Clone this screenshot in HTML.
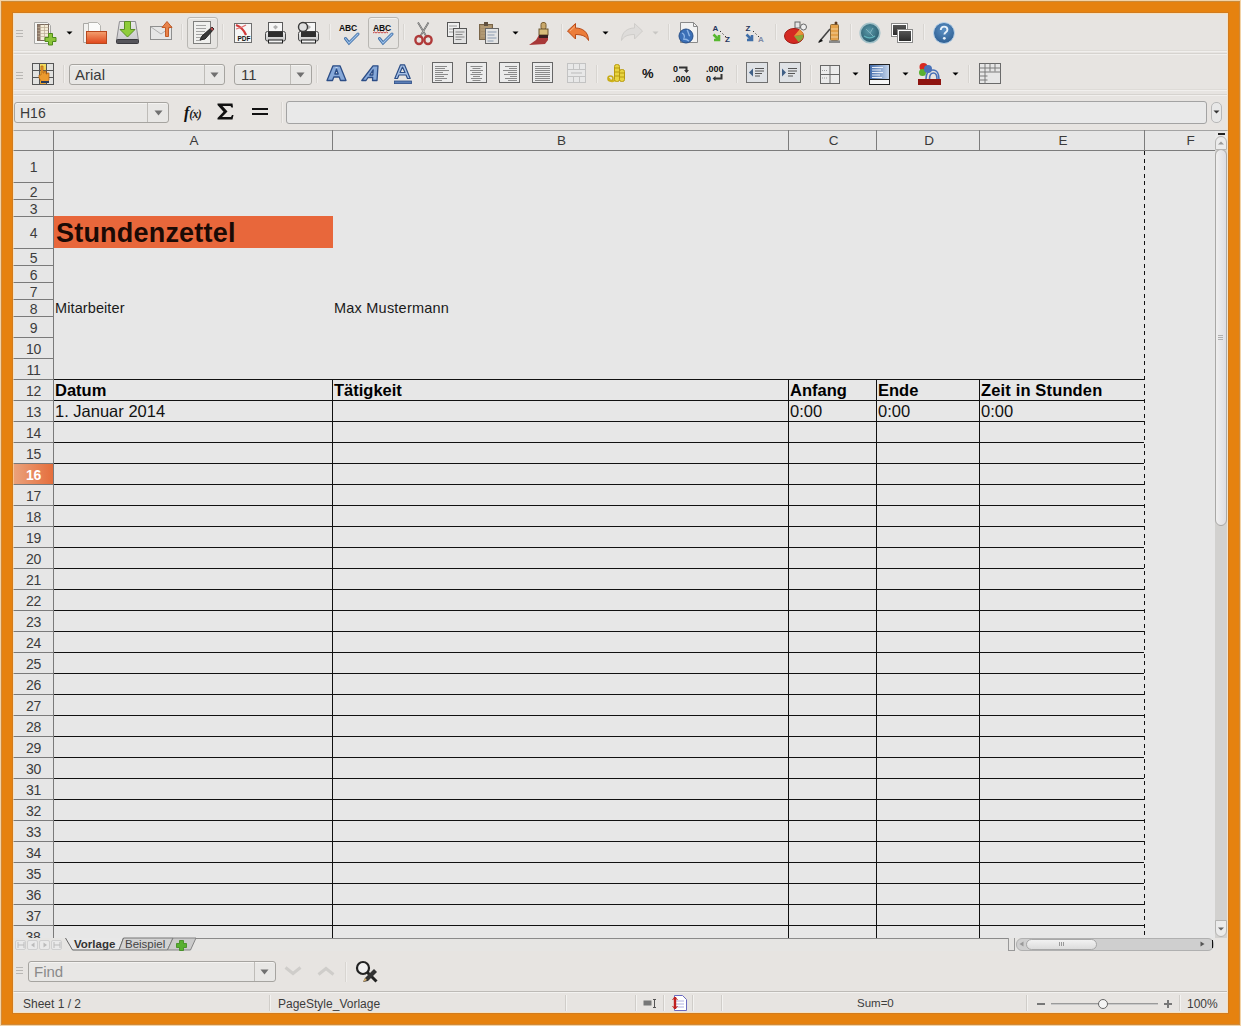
<!DOCTYPE html>
<html><head><meta charset="utf-8">
<style>
*{margin:0;padding:0;box-sizing:border-box}
html,body{width:1241px;height:1026px;overflow:hidden;background:#f3d3a6}
body{font-family:"Liberation Sans",sans-serif;position:relative}
div{position:absolute}
.t{white-space:nowrap;line-height:1}
svg{position:absolute;overflow:visible}
</style></head>
<body>

<div style="left:1px;top:1px;width:1239px;height:1024px;background:#e6820f"></div>
<div style="left:1px;top:1px;width:1239px;height:1px;background:#c98a3a"></div>
<div style="left:1px;top:1px;width:1px;height:1024px;background:#d08a3a"></div>
<div style="left:1239px;top:1px;width:1px;height:1024px;background:#d08a3a"></div>
<div style="left:1px;top:1024px;width:1239px;height:1px;background:#d08a3a"></div>
<div style="left:12px;top:12px;width:1217px;height:1002px;background:#d27b1e"></div>
<div style="left:13px;top:13px;width:1215px;height:1000px;background:#e7e4e1"></div>
<div style="left:13px;top:130px;width:1202px;height:21px;background:#e6e6e6"></div>
<div style="left:13px;top:151px;width:1202px;height:787px;background:#e7e7e7"></div>
<div style="left:13px;top:151px;width:40px;height:787px;background:#e6e6e6"></div>
<div style="left:13px;top:464px;width:40px;height:20px;background:linear-gradient(90deg,#eaa37d,#e56e3c)"></div>
<svg width="1241" height="1026" style="left:0;top:0" shape-rendering="crispEdges"><rect x="13" y="130" width="1202" height="1" fill="#a3a3a3"/><rect x="13" y="150" width="1202" height="1" fill="#7c7c7c"/><rect x="53" y="130" width="1" height="808" fill="#7a7a7a"/><rect x="332" y="130" width="1" height="20" fill="#7c7c7c"/><rect x="788" y="130" width="1" height="20" fill="#7c7c7c"/><rect x="876" y="130" width="1" height="20" fill="#7c7c7c"/><rect x="979" y="130" width="1" height="20" fill="#7c7c7c"/><rect x="1144" y="130" width="1" height="20" fill="#7c7c7c"/><rect x="1215" y="130" width="1" height="20" fill="#7c7c7c"/><rect x="13" y="182" width="40" height="1" fill="#7a7a7a"/><rect x="13" y="199" width="40" height="1" fill="#7a7a7a"/><rect x="13" y="216" width="40" height="1" fill="#7a7a7a"/><rect x="13" y="248" width="40" height="1" fill="#7a7a7a"/><rect x="13" y="265" width="40" height="1" fill="#7a7a7a"/><rect x="13" y="282" width="40" height="1" fill="#7a7a7a"/><rect x="13" y="299" width="40" height="1" fill="#7a7a7a"/><rect x="13" y="316" width="40" height="1" fill="#7a7a7a"/><rect x="13" y="337" width="40" height="1" fill="#7a7a7a"/><rect x="13" y="358" width="40" height="1" fill="#7a7a7a"/><rect x="13" y="379" width="40" height="1" fill="#7a7a7a"/><rect x="13" y="400" width="40" height="1" fill="#7a7a7a"/><rect x="13" y="421" width="40" height="1" fill="#7a7a7a"/><rect x="13" y="442" width="40" height="1" fill="#7a7a7a"/><rect x="13" y="463" width="40" height="1" fill="#7a7a7a"/><rect x="13" y="484" width="40" height="1" fill="#7a7a7a"/><rect x="13" y="505" width="40" height="1" fill="#7a7a7a"/><rect x="13" y="526" width="40" height="1" fill="#7a7a7a"/><rect x="13" y="547" width="40" height="1" fill="#7a7a7a"/><rect x="13" y="568" width="40" height="1" fill="#7a7a7a"/><rect x="13" y="589" width="40" height="1" fill="#7a7a7a"/><rect x="13" y="610" width="40" height="1" fill="#7a7a7a"/><rect x="13" y="631" width="40" height="1" fill="#7a7a7a"/><rect x="13" y="652" width="40" height="1" fill="#7a7a7a"/><rect x="13" y="673" width="40" height="1" fill="#7a7a7a"/><rect x="13" y="694" width="40" height="1" fill="#7a7a7a"/><rect x="13" y="715" width="40" height="1" fill="#7a7a7a"/><rect x="13" y="736" width="40" height="1" fill="#7a7a7a"/><rect x="13" y="757" width="40" height="1" fill="#7a7a7a"/><rect x="13" y="778" width="40" height="1" fill="#7a7a7a"/><rect x="13" y="799" width="40" height="1" fill="#7a7a7a"/><rect x="13" y="820" width="40" height="1" fill="#7a7a7a"/><rect x="13" y="841" width="40" height="1" fill="#7a7a7a"/><rect x="13" y="862" width="40" height="1" fill="#7a7a7a"/><rect x="13" y="883" width="40" height="1" fill="#7a7a7a"/><rect x="13" y="904" width="40" height="1" fill="#7a7a7a"/><rect x="13" y="925" width="40" height="1" fill="#7a7a7a"/><rect x="54" y="400" width="1090" height="1" fill="#111"/><rect x="54" y="421" width="1090" height="1" fill="#111"/><rect x="54" y="442" width="1090" height="1" fill="#111"/><rect x="54" y="463" width="1090" height="1" fill="#111"/><rect x="54" y="484" width="1090" height="1" fill="#111"/><rect x="54" y="505" width="1090" height="1" fill="#111"/><rect x="54" y="526" width="1090" height="1" fill="#111"/><rect x="54" y="547" width="1090" height="1" fill="#111"/><rect x="54" y="568" width="1090" height="1" fill="#111"/><rect x="54" y="589" width="1090" height="1" fill="#111"/><rect x="54" y="610" width="1090" height="1" fill="#111"/><rect x="54" y="631" width="1090" height="1" fill="#111"/><rect x="54" y="652" width="1090" height="1" fill="#111"/><rect x="54" y="673" width="1090" height="1" fill="#111"/><rect x="54" y="694" width="1090" height="1" fill="#111"/><rect x="54" y="715" width="1090" height="1" fill="#111"/><rect x="54" y="736" width="1090" height="1" fill="#111"/><rect x="54" y="757" width="1090" height="1" fill="#111"/><rect x="54" y="778" width="1090" height="1" fill="#111"/><rect x="54" y="799" width="1090" height="1" fill="#111"/><rect x="54" y="820" width="1090" height="1" fill="#111"/><rect x="54" y="841" width="1090" height="1" fill="#111"/><rect x="54" y="862" width="1090" height="1" fill="#111"/><rect x="54" y="883" width="1090" height="1" fill="#111"/><rect x="54" y="904" width="1090" height="1" fill="#111"/><rect x="54" y="925" width="1090" height="1" fill="#111"/><rect x="54" y="379" width="1090" height="1" fill="#111"/><rect x="332" y="379" width="1" height="559" fill="#111"/><rect x="788" y="379" width="1" height="559" fill="#111"/><rect x="876" y="379" width="1" height="559" fill="#111"/><rect x="979" y="379" width="1" height="559" fill="#111"/><rect x="1144" y="151" width="1" height="4" fill="#111"/><rect x="1144" y="159" width="1" height="4" fill="#111"/><rect x="1144" y="166" width="1" height="4" fill="#111"/><rect x="1144" y="174" width="1" height="4" fill="#111"/><rect x="1144" y="181" width="1" height="4" fill="#111"/><rect x="1144" y="189" width="1" height="4" fill="#111"/><rect x="1144" y="196" width="1" height="4" fill="#111"/><rect x="1144" y="204" width="1" height="4" fill="#111"/><rect x="1144" y="211" width="1" height="4" fill="#111"/><rect x="1144" y="219" width="1" height="4" fill="#111"/><rect x="1144" y="226" width="1" height="4" fill="#111"/><rect x="1144" y="234" width="1" height="4" fill="#111"/><rect x="1144" y="241" width="1" height="4" fill="#111"/><rect x="1144" y="249" width="1" height="4" fill="#111"/><rect x="1144" y="256" width="1" height="4" fill="#111"/><rect x="1144" y="264" width="1" height="4" fill="#111"/><rect x="1144" y="271" width="1" height="4" fill="#111"/><rect x="1144" y="279" width="1" height="4" fill="#111"/><rect x="1144" y="286" width="1" height="4" fill="#111"/><rect x="1144" y="294" width="1" height="4" fill="#111"/><rect x="1144" y="301" width="1" height="4" fill="#111"/><rect x="1144" y="309" width="1" height="4" fill="#111"/><rect x="1144" y="316" width="1" height="4" fill="#111"/><rect x="1144" y="324" width="1" height="4" fill="#111"/><rect x="1144" y="331" width="1" height="4" fill="#111"/><rect x="1144" y="339" width="1" height="4" fill="#111"/><rect x="1144" y="346" width="1" height="4" fill="#111"/><rect x="1144" y="354" width="1" height="4" fill="#111"/><rect x="1144" y="361" width="1" height="4" fill="#111"/><rect x="1144" y="369" width="1" height="4" fill="#111"/><rect x="1144" y="376" width="1" height="4" fill="#111"/><rect x="1144" y="384" width="1" height="4" fill="#111"/><rect x="1144" y="391" width="1" height="4" fill="#111"/><rect x="1144" y="399" width="1" height="4" fill="#111"/><rect x="1144" y="406" width="1" height="4" fill="#111"/><rect x="1144" y="414" width="1" height="4" fill="#111"/><rect x="1144" y="421" width="1" height="4" fill="#111"/><rect x="1144" y="429" width="1" height="4" fill="#111"/><rect x="1144" y="436" width="1" height="4" fill="#111"/><rect x="1144" y="444" width="1" height="4" fill="#111"/><rect x="1144" y="451" width="1" height="4" fill="#111"/><rect x="1144" y="459" width="1" height="4" fill="#111"/><rect x="1144" y="466" width="1" height="4" fill="#111"/><rect x="1144" y="474" width="1" height="4" fill="#111"/><rect x="1144" y="481" width="1" height="4" fill="#111"/><rect x="1144" y="489" width="1" height="4" fill="#111"/><rect x="1144" y="496" width="1" height="4" fill="#111"/><rect x="1144" y="504" width="1" height="4" fill="#111"/><rect x="1144" y="511" width="1" height="4" fill="#111"/><rect x="1144" y="519" width="1" height="4" fill="#111"/><rect x="1144" y="526" width="1" height="4" fill="#111"/><rect x="1144" y="534" width="1" height="4" fill="#111"/><rect x="1144" y="541" width="1" height="4" fill="#111"/><rect x="1144" y="549" width="1" height="4" fill="#111"/><rect x="1144" y="556" width="1" height="4" fill="#111"/><rect x="1144" y="564" width="1" height="4" fill="#111"/><rect x="1144" y="571" width="1" height="4" fill="#111"/><rect x="1144" y="579" width="1" height="4" fill="#111"/><rect x="1144" y="586" width="1" height="4" fill="#111"/><rect x="1144" y="594" width="1" height="4" fill="#111"/><rect x="1144" y="601" width="1" height="4" fill="#111"/><rect x="1144" y="609" width="1" height="4" fill="#111"/><rect x="1144" y="616" width="1" height="4" fill="#111"/><rect x="1144" y="624" width="1" height="4" fill="#111"/><rect x="1144" y="631" width="1" height="4" fill="#111"/><rect x="1144" y="639" width="1" height="4" fill="#111"/><rect x="1144" y="646" width="1" height="4" fill="#111"/><rect x="1144" y="654" width="1" height="4" fill="#111"/><rect x="1144" y="661" width="1" height="4" fill="#111"/><rect x="1144" y="669" width="1" height="4" fill="#111"/><rect x="1144" y="676" width="1" height="4" fill="#111"/><rect x="1144" y="684" width="1" height="4" fill="#111"/><rect x="1144" y="691" width="1" height="4" fill="#111"/><rect x="1144" y="699" width="1" height="4" fill="#111"/><rect x="1144" y="706" width="1" height="4" fill="#111"/><rect x="1144" y="714" width="1" height="4" fill="#111"/><rect x="1144" y="721" width="1" height="4" fill="#111"/><rect x="1144" y="729" width="1" height="4" fill="#111"/><rect x="1144" y="736" width="1" height="4" fill="#111"/><rect x="1144" y="744" width="1" height="4" fill="#111"/><rect x="1144" y="751" width="1" height="4" fill="#111"/><rect x="1144" y="759" width="1" height="4" fill="#111"/><rect x="1144" y="766" width="1" height="4" fill="#111"/><rect x="1144" y="774" width="1" height="4" fill="#111"/><rect x="1144" y="781" width="1" height="4" fill="#111"/><rect x="1144" y="789" width="1" height="4" fill="#111"/><rect x="1144" y="796" width="1" height="4" fill="#111"/><rect x="1144" y="804" width="1" height="4" fill="#111"/><rect x="1144" y="811" width="1" height="4" fill="#111"/><rect x="1144" y="819" width="1" height="4" fill="#111"/><rect x="1144" y="826" width="1" height="4" fill="#111"/><rect x="1144" y="834" width="1" height="4" fill="#111"/><rect x="1144" y="841" width="1" height="4" fill="#111"/><rect x="1144" y="849" width="1" height="4" fill="#111"/><rect x="1144" y="856" width="1" height="4" fill="#111"/><rect x="1144" y="864" width="1" height="4" fill="#111"/><rect x="1144" y="871" width="1" height="4" fill="#111"/><rect x="1144" y="879" width="1" height="4" fill="#111"/><rect x="1144" y="886" width="1" height="4" fill="#111"/><rect x="1144" y="894" width="1" height="4" fill="#111"/><rect x="1144" y="901" width="1" height="4" fill="#111"/><rect x="1144" y="909" width="1" height="4" fill="#111"/><rect x="1144" y="916" width="1" height="4" fill="#111"/><rect x="1144" y="924" width="1" height="4" fill="#111"/><rect x="1144" y="931" width="1" height="4" fill="#111"/><rect x="54" y="216" width="279" height="32" fill="#e8673b"/></svg>
<div class="t" style="left:174.0px;top:134px;width:40px;text-align:center;font-size:13.5px;color:#3a3a3a">A</div>
<div class="t" style="left:541.5px;top:134px;width:40px;text-align:center;font-size:13.5px;color:#3a3a3a">B</div>
<div class="t" style="left:813.5px;top:134px;width:40px;text-align:center;font-size:13.5px;color:#3a3a3a">C</div>
<div class="t" style="left:909.0px;top:134px;width:40px;text-align:center;font-size:13.5px;color:#3a3a3a">D</div>
<div class="t" style="left:1043.0px;top:134px;width:40px;text-align:center;font-size:13.5px;color:#3a3a3a">E</div>
<div class="t" style="left:1170.5px;top:134px;width:40px;text-align:center;font-size:13.5px;color:#3a3a3a">F</div>
<div class="t" style="left:13.5px;top:160.0px;width:40px;text-align:center;font-size:14px;letter-spacing:-0.3px;color:#3c3c3c;font-weight:normal">1</div>
<div class="t" style="left:13.5px;top:184.5px;width:40px;text-align:center;font-size:14px;letter-spacing:-0.3px;color:#3c3c3c;font-weight:normal">2</div>
<div class="t" style="left:13.5px;top:201.5px;width:40px;text-align:center;font-size:14px;letter-spacing:-0.3px;color:#3c3c3c;font-weight:normal">3</div>
<div class="t" style="left:13.5px;top:226.0px;width:40px;text-align:center;font-size:14px;letter-spacing:-0.3px;color:#3c3c3c;font-weight:normal">4</div>
<div class="t" style="left:13.5px;top:250.5px;width:40px;text-align:center;font-size:14px;letter-spacing:-0.3px;color:#3c3c3c;font-weight:normal">5</div>
<div class="t" style="left:13.5px;top:267.5px;width:40px;text-align:center;font-size:14px;letter-spacing:-0.3px;color:#3c3c3c;font-weight:normal">6</div>
<div class="t" style="left:13.5px;top:284.5px;width:40px;text-align:center;font-size:14px;letter-spacing:-0.3px;color:#3c3c3c;font-weight:normal">7</div>
<div class="t" style="left:13.5px;top:301.5px;width:40px;text-align:center;font-size:14px;letter-spacing:-0.3px;color:#3c3c3c;font-weight:normal">8</div>
<div class="t" style="left:13.5px;top:320.5px;width:40px;text-align:center;font-size:14px;letter-spacing:-0.3px;color:#3c3c3c;font-weight:normal">9</div>
<div class="t" style="left:13.5px;top:341.5px;width:40px;text-align:center;font-size:14px;letter-spacing:-0.3px;color:#3c3c3c;font-weight:normal">10</div>
<div class="t" style="left:13.5px;top:362.5px;width:40px;text-align:center;font-size:14px;letter-spacing:-0.3px;color:#3c3c3c;font-weight:normal">11</div>
<div class="t" style="left:13.5px;top:383.5px;width:40px;text-align:center;font-size:14px;letter-spacing:-0.3px;color:#3c3c3c;font-weight:normal">12</div>
<div class="t" style="left:13.5px;top:404.5px;width:40px;text-align:center;font-size:14px;letter-spacing:-0.3px;color:#3c3c3c;font-weight:normal">13</div>
<div class="t" style="left:13.5px;top:425.5px;width:40px;text-align:center;font-size:14px;letter-spacing:-0.3px;color:#3c3c3c;font-weight:normal">14</div>
<div class="t" style="left:13.5px;top:446.5px;width:40px;text-align:center;font-size:14px;letter-spacing:-0.3px;color:#3c3c3c;font-weight:normal">15</div>
<div class="t" style="left:13.5px;top:467.5px;width:40px;text-align:center;font-size:14px;letter-spacing:-0.3px;color:#fff;font-weight:bold">16</div>
<div class="t" style="left:13.5px;top:488.5px;width:40px;text-align:center;font-size:14px;letter-spacing:-0.3px;color:#3c3c3c;font-weight:normal">17</div>
<div class="t" style="left:13.5px;top:509.5px;width:40px;text-align:center;font-size:14px;letter-spacing:-0.3px;color:#3c3c3c;font-weight:normal">18</div>
<div class="t" style="left:13.5px;top:530.5px;width:40px;text-align:center;font-size:14px;letter-spacing:-0.3px;color:#3c3c3c;font-weight:normal">19</div>
<div class="t" style="left:13.5px;top:551.5px;width:40px;text-align:center;font-size:14px;letter-spacing:-0.3px;color:#3c3c3c;font-weight:normal">20</div>
<div class="t" style="left:13.5px;top:572.5px;width:40px;text-align:center;font-size:14px;letter-spacing:-0.3px;color:#3c3c3c;font-weight:normal">21</div>
<div class="t" style="left:13.5px;top:593.5px;width:40px;text-align:center;font-size:14px;letter-spacing:-0.3px;color:#3c3c3c;font-weight:normal">22</div>
<div class="t" style="left:13.5px;top:614.5px;width:40px;text-align:center;font-size:14px;letter-spacing:-0.3px;color:#3c3c3c;font-weight:normal">23</div>
<div class="t" style="left:13.5px;top:635.5px;width:40px;text-align:center;font-size:14px;letter-spacing:-0.3px;color:#3c3c3c;font-weight:normal">24</div>
<div class="t" style="left:13.5px;top:656.5px;width:40px;text-align:center;font-size:14px;letter-spacing:-0.3px;color:#3c3c3c;font-weight:normal">25</div>
<div class="t" style="left:13.5px;top:677.5px;width:40px;text-align:center;font-size:14px;letter-spacing:-0.3px;color:#3c3c3c;font-weight:normal">26</div>
<div class="t" style="left:13.5px;top:698.5px;width:40px;text-align:center;font-size:14px;letter-spacing:-0.3px;color:#3c3c3c;font-weight:normal">27</div>
<div class="t" style="left:13.5px;top:719.5px;width:40px;text-align:center;font-size:14px;letter-spacing:-0.3px;color:#3c3c3c;font-weight:normal">28</div>
<div class="t" style="left:13.5px;top:740.5px;width:40px;text-align:center;font-size:14px;letter-spacing:-0.3px;color:#3c3c3c;font-weight:normal">29</div>
<div class="t" style="left:13.5px;top:761.5px;width:40px;text-align:center;font-size:14px;letter-spacing:-0.3px;color:#3c3c3c;font-weight:normal">30</div>
<div class="t" style="left:13.5px;top:782.5px;width:40px;text-align:center;font-size:14px;letter-spacing:-0.3px;color:#3c3c3c;font-weight:normal">31</div>
<div class="t" style="left:13.5px;top:803.5px;width:40px;text-align:center;font-size:14px;letter-spacing:-0.3px;color:#3c3c3c;font-weight:normal">32</div>
<div class="t" style="left:13.5px;top:824.5px;width:40px;text-align:center;font-size:14px;letter-spacing:-0.3px;color:#3c3c3c;font-weight:normal">33</div>
<div class="t" style="left:13.5px;top:845.5px;width:40px;text-align:center;font-size:14px;letter-spacing:-0.3px;color:#3c3c3c;font-weight:normal">34</div>
<div class="t" style="left:13.5px;top:866.5px;width:40px;text-align:center;font-size:14px;letter-spacing:-0.3px;color:#3c3c3c;font-weight:normal">35</div>
<div class="t" style="left:13.5px;top:887.5px;width:40px;text-align:center;font-size:14px;letter-spacing:-0.3px;color:#3c3c3c;font-weight:normal">36</div>
<div class="t" style="left:13.5px;top:908.5px;width:40px;text-align:center;font-size:14px;letter-spacing:-0.3px;color:#3c3c3c;font-weight:normal">37</div>
<div class="t" style="left:13px;top:929.5px;width:40px;height:8.5px;overflow:hidden;text-align:center;font-size:14px;letter-spacing:-0.3px;color:#3a3a3a">38</div>
<div class="t" style="left:56px;top:220px;font-size:27px;color:#1a0a05;font-weight:bold;letter-spacing:0.2px">Stundenzettel</div>
<div class="t" style="left:55px;top:301px;font-size:14.5px;color:#1a1a1a;font-weight:normal;letter-spacing:0.1px">Mitarbeiter</div>
<div class="t" style="left:334px;top:301px;font-size:14.5px;color:#1a1a1a;font-weight:normal;letter-spacing:0.22px">Max Mustermann</div>
<div class="t" style="left:55px;top:382px;font-size:16.5px;color:#000;font-weight:bold;">Datum</div>
<div class="t" style="left:334px;top:382px;font-size:16.5px;color:#000;font-weight:bold;">Tätigkeit</div>
<div class="t" style="left:790px;top:382px;font-size:16.5px;color:#000;font-weight:bold;">Anfang</div>
<div class="t" style="left:878px;top:382px;font-size:16.5px;color:#000;font-weight:bold;">Ende</div>
<div class="t" style="left:981px;top:382px;font-size:16.5px;color:#000;font-weight:bold;letter-spacing:0.15px">Zeit in Stunden</div>
<div class="t" style="left:55px;top:403px;font-size:16.5px;color:#111;font-weight:normal;">1. Januar 2014</div>
<div class="t" style="left:790px;top:403px;font-size:16.5px;color:#111;font-weight:normal;">0:00</div>
<div class="t" style="left:878px;top:403px;font-size:16.5px;color:#111;font-weight:normal;">0:00</div>
<div class="t" style="left:981px;top:403px;font-size:16.5px;color:#111;font-weight:normal;">0:00</div>
<div style="left:13px;top:50px;width:1214px;height:1px;background:#dedbd7;"></div>
<div style="left:13px;top:51px;width:1214px;height:1px;background:#f1efed;"></div>
<div style="left:13px;top:53px;width:1214px;height:1px;background:#d6d3cf;"></div>
<div style="left:13px;top:54px;width:1214px;height:1px;background:#f1efed;"></div>
<div style="left:13px;top:89px;width:1214px;height:1px;background:#dedbd7;"></div>
<div style="left:13px;top:90px;width:1214px;height:1px;background:#f1efed;"></div>
<div style="left:13px;top:94px;width:1214px;height:1px;background:#d6d3cf;"></div>
<div style="left:13px;top:95px;width:1214px;height:1px;background:#f1efed;"></div>
<div style="left:16px;top:30px;width:7px;height:1px;background:#b9b7b4;"></div>
<div style="left:16px;top:33px;width:7px;height:1px;background:#b9b7b4;"></div>
<div style="left:16px;top:36px;width:7px;height:1px;background:#b9b7b4;"></div>
<div style="left:16px;top:72px;width:7px;height:1px;background:#b9b7b4;"></div>
<div style="left:16px;top:75px;width:7px;height:1px;background:#b9b7b4;"></div>
<div style="left:16px;top:78px;width:7px;height:1px;background:#b9b7b4;"></div>
<svg style="left:33px;top:21px" width="24" height="24" viewBox="0 0 24 24"><path d="M1.5 1.5h13l3 3v18h-16z" fill="#f6f6f4" stroke="#a8a8a6"/>
<rect x="4.5" y="3.5" width="11" height="16" fill="#f3ecd8" stroke="#7a6a5e"/>
<rect x="4.5" y="3.5" width="3" height="16" fill="#927c6c"/>
<path d="M4.5 6.5h11M4.5 9.5h11M4.5 12.5h11M4.5 15.5h11M11.5 3.5v16" stroke="#b9aa94" stroke-width="0.7"/>
<path d="M15.5 12.5h4v4h3.5v4h-3.5v3.5h-4v-3.5h-3.5v-4h3.5z" fill="#8cc43a" stroke="#4e8a1a"/></svg>
<svg style="left:66px;top:31px" width="7" height="4" viewBox="0 0 7 4"><path d="M0.5 0.5h6l-3 3z" fill="#000"/></svg>
<svg style="left:82px;top:21px" width="26" height="24" viewBox="0 0 26 24"><path d="M1.5 2.5h6l1 2h8v17h-15z" fill="#f2f1ef" stroke="#a9a8a5"/>
<path d="M6.5 1.5h9l3 3v10h-12z" fill="#fbfbfa" stroke="#b5b4b0"/>
<defs><linearGradient id="gop" x1="0" y1="0" x2="0" y2="1"><stop offset="0" stop-color="#f3a070"/><stop offset="1" stop-color="#e0451a"/></linearGradient></defs>
<rect x="4.5" y="10.5" width="20" height="12" fill="url(#gop)" stroke="#b8481e"/></svg>
<svg style="left:115px;top:20px" width="26" height="25" viewBox="0 0 26 25"><defs><linearGradient id="gsv" x1="0" y1="0" x2="0" y2="1"><stop offset="0" stop-color="#ecebeb"/><stop offset="1" stop-color="#c9c8cc"/></linearGradient></defs>
<path d="M4.5 1.5h16l3 19h-22z" fill="url(#gsv)" stroke="#8e8d92"/>
<rect x="1.5" y="19.5" width="22" height="4" rx="1" fill="#55545a" stroke="#3a393e"/>
<path d="M9.5 1.5h6v8h4.5l-7.5 7.5l-7.5-7.5h4.5z" fill="#8fcc3a" stroke="#5a8f24"/></svg>
<svg style="left:149px;top:20px" width="26" height="22" viewBox="0 0 26 22"><rect x="1.5" y="6.5" width="21" height="13" fill="#e6e6e6" stroke="#8f8f8f"/>
<path d="M2 7l10 7l10-7" fill="none" stroke="#b0b0b0"/>
<path d="M16.5 16.5v-9h-3.5l5-6l5 6h-3.5v9z" fill="#e8824a" stroke="#c25a26"/></svg>
<div style="left:181px;top:24px;width:1px;height:16px;background:#d8d5d1;"></div>
<div style="left:182px;top:24px;width:1px;height:16px;background:#f0eeec;"></div>
<div style="left:187px;top:17px;width:31px;height:32px;border:1px solid #b9b7b3;border-radius:3px;background:#e6e4e1;box-shadow:inset 0 1px 0 #f3f2f0"></div>
<svg style="left:192px;top:20px" width="24" height="25" viewBox="0 0 24 25"><rect x="1.5" y="1.5" width="17" height="22" fill="#f0f0ee" stroke="#7f7f7d"/>
<path d="M4 5.5h10M4 8.5h10M4 11.5h9M4 14.5h8M4 17.5h6M4 20.5h5" stroke="#9a9a98" stroke-width="0.9"/>
<path d="M8 20l2-4l10-9l2 2l-9 10z" fill="#3a3a3a" stroke="#222"/>
<path d="M19 8l2 2" stroke="#c05050" stroke-width="2"/></svg>
<div style="left:222px;top:24px;width:1px;height:16px;background:#d8d5d1;"></div>
<div style="left:223px;top:24px;width:1px;height:16px;background:#f0eeec;"></div>
<svg style="left:233px;top:22px" width="20" height="22" viewBox="0 0 20 22"><rect x="1.5" y="1.5" width="17" height="19" fill="#f6f6f6" stroke="#6f6f6f"/>
<path d="M3 3c5 2 8 5 10 10" stroke="#d23a3a" stroke-width="2.2" fill="none"/>
<path d="M3 7c4-1 7-2 10-4" stroke="#e07070" stroke-width="1.2" fill="none"/>
<text x="4.5" y="19" font-family="Liberation Sans" font-weight="bold" font-size="6.5" fill="#111">PDF</text></svg>
<svg style="left:264px;top:21px" width="23" height="23" viewBox="0 0 23 23"><defs><linearGradient id="gpr" x1="0" y1="0" x2="0" y2="1"><stop offset="0" stop-color="#f2f2f2"/><stop offset="1" stop-color="#c4c4c4"/></linearGradient></defs>
<rect x="4.5" y="1.5" width="14" height="10" fill="#f6f6f6" stroke="#5a5a5a"/>
<path d="M9 6l2.5 2.5l2.5-2.5l-2.5-2z" fill="#b0b0b0"/>
<rect x="1.5" y="10.5" width="20" height="9.5" rx="2" fill="url(#gpr)" stroke="#4a4a4a"/>
<rect x="4" y="10.5" width="15" height="5.5" fill="#2e2e2e"/>
<rect x="4.5" y="19" width="14" height="3" fill="#f4f4f4" stroke="#1e1e1e"/></svg>
<svg style="left:297px;top:21px" width="23" height="23" viewBox="0 0 23 23"><defs><linearGradient id="gpr" x1="0" y1="0" x2="0" y2="1"><stop offset="0" stop-color="#f2f2f2"/><stop offset="1" stop-color="#c4c4c4"/></linearGradient></defs>
<rect x="4.5" y="1.5" width="14" height="10" fill="#f6f6f6" stroke="#5a5a5a"/>
<path d="M9 6l2.5 2.5l2.5-2.5l-2.5-2z" fill="#b0b0b0"/>
<rect x="1.5" y="10.5" width="20" height="9.5" rx="2" fill="url(#gpr)" stroke="#4a4a4a"/>
<rect x="4" y="10.5" width="15" height="5.5" fill="#2e2e2e"/>
<rect x="4.5" y="19" width="14" height="3" fill="#f4f4f4" stroke="#1e1e1e"/><circle cx="6" cy="6" r="4.5" fill="#e0e0e0" stroke="#3a3a3a" stroke-width="1.4"/></svg>
<div style="left:329px;top:24px;width:1px;height:16px;background:#d8d5d1;"></div>
<div style="left:330px;top:24px;width:1px;height:16px;background:#f0eeec;"></div>
<svg style="left:338px;top:24px" width="23" height="21" viewBox="0 0 23 21"><text x="1" y="7" font-family="Liberation Sans" font-weight="bold" font-size="8.5" fill="#111" letter-spacing="-0.2">ABC</text><path d="M7.5 14.5l3.5 4.5l9-9" stroke="#3f6fa8" stroke-width="3" fill="none" stroke-linecap="round"/><path d="M7.5 14.5l3.5 4.5l9-9" stroke="#9cc0e8" stroke-width="1.2" fill="none" stroke-linecap="round"/></svg>
<div style="left:368px;top:17px;width:31px;height:32px;border:1px solid #b9b7b3;border-radius:3px;background:#e6e4e1;box-shadow:inset 0 1px 0 #f3f2f0"></div>
<svg style="left:372px;top:24px" width="23" height="21" viewBox="0 0 23 21"><text x="1" y="7" font-family="Liberation Sans" font-weight="bold" font-size="8.5" fill="#111" letter-spacing="-0.2">ABC</text><path d="M1 9l1.5-1l1.5 1l1.5-1l1.5 1l1.5-1l1.5 1l1.5-1l1.5 1l1.5-1l1.5 1" stroke="#c02020" fill="none" stroke-width="0.8"/><path d="M7.5 14.5l3.5 4.5l9-9" stroke="#3f6fa8" stroke-width="3" fill="none" stroke-linecap="round"/><path d="M7.5 14.5l3.5 4.5l9-9" stroke="#9cc0e8" stroke-width="1.2" fill="none" stroke-linecap="round"/></svg>
<div style="left:403px;top:24px;width:1px;height:16px;background:#d8d5d1;"></div>
<div style="left:404px;top:24px;width:1px;height:16px;background:#f0eeec;"></div>
<svg style="left:413px;top:21px" width="22" height="24" viewBox="0 0 22 24"><path d="M5 1.5l9 15M15.5 1.5l-9 15" stroke="#555" stroke-width="1.6" fill="none"/>
<path d="M5 1.5l9 15M15.5 1.5l-9 15" stroke="#ddd" stroke-width="0.6" fill="none"/>
<ellipse cx="6" cy="19" rx="3.6" ry="4" fill="none" stroke="#b03a3a" stroke-width="2.4"/>
<ellipse cx="15" cy="19" rx="3.6" ry="4" fill="none" stroke="#b03a3a" stroke-width="2.4"/></svg>
<svg style="left:446px;top:21px" width="22" height="24" viewBox="0 0 22 24"><rect x="1.5" y="1.5" width="12" height="14" fill="#efefef" stroke="#555"/>
<path d="M3 5h8M3 8h5M3 11h6" stroke="#999"/>
<rect x="7.5" y="7.5" width="13" height="15" fill="#e2e2e2" stroke="#555"/>
<path d="M9.5 11h9M9.5 13.5h7M9.5 16h9M9.5 18.5h6" stroke="#888"/></svg>
<svg style="left:478px;top:21px" width="22" height="24" viewBox="0 0 22 24"><rect x="1.5" y="3.5" width="13" height="15" fill="#a88f6a" stroke="#7a6548"/>
<path d="M3 6h10M3 9h10M3 12h10M3 15h10" stroke="#bba37e"/>
<rect x="6" y="1" width="4" height="4" fill="#5f5040"/>
<rect x="7.5" y="7.5" width="13" height="15" fill="#e4e4e4" stroke="#666"/>
<path d="M9.5 11h9M9.5 14h7M9.5 17h9M9.5 20h6" stroke="#8a9ab0"/></svg>
<svg style="left:512px;top:31px" width="7" height="4" viewBox="0 0 7 4"><path d="M0.5 0.5h6l-3 3z" fill="#000"/></svg>
<svg style="left:528px;top:21px" width="24" height="24" viewBox="0 0 24 24"><rect x="13" y="1.5" width="5" height="7" rx="2" fill="#c9a86a" stroke="#7a5f30"/>
<rect x="11" y="8" width="9" height="6" fill="#d8bd7a" stroke="#6a5530"/>
<path d="M11 14h9v5l-3 4l-16 1l7-5z" fill="#a83838"/>
<path d="M11 14h9v3h-9z" fill="#3a2020"/></svg>
<div style="left:561px;top:24px;width:1px;height:16px;background:#d8d5d1;"></div>
<div style="left:562px;top:24px;width:1px;height:16px;background:#f0eeec;"></div>
<svg style="left:566px;top:22px" width="26" height="20" viewBox="0 0 26 20"><path d="M1.5 9l8-7.5v4.5c7 0 13 4 13 12.5c-2-4-6-6-13-6v4.5z" fill="#ec7d3a" stroke="#b84a18"/>
<path d="M4 9l5-4.5" stroke="#f7b080" stroke-width="1"/></svg>
<svg style="left:602px;top:31px" width="7" height="4" viewBox="0 0 7 4"><path d="M0.5 0.5h6l-3 3z" fill="#000"/></svg>
<svg style="left:618px;top:22px" width="26" height="20" viewBox="0 0 26 20"><path d="M24.5 9l-8-7.5v4.5c-7 0-13 4-13 12.5c2-4 6-6 13-6v4.5z" fill="#dedcda" stroke="#cfcdca"/></svg>
<svg style="left:652px;top:31px" width="7" height="4" viewBox="0 0 7 4"><path d="M0.5 0.5h6l-3 3z" fill="#c8c6c3"/></svg>
<div style="left:668px;top:24px;width:1px;height:16px;background:#d8d5d1;"></div>
<div style="left:669px;top:24px;width:1px;height:16px;background:#f0eeec;"></div>
<svg style="left:678px;top:21px" width="22" height="23" viewBox="0 0 22 23"><path d="M2.5 1.5h13l4 4v16h-17z" fill="#f2f2f2" stroke="#8a8a8a"/>
<path d="M15.5 1.5v4h4" fill="none" stroke="#8a8a8a"/>
<circle cx="8" cy="15" r="7" fill="#3b6fb6" stroke="#284f88"/>
<path d="M4 12c2 1 3 3 2 5M9 9c2 2 1 5 3 6M5 18c3 0 5 1 6 2" stroke="#8fb6e6" stroke-width="1.3" fill="none"/></svg>
<svg style="left:712px;top:23px" width="22" height="21" viewBox="0 0 22 21"><text x="0.5" y="8" font-family="Liberation Sans" font-weight="bold" font-size="8" fill="#26365e">A</text>
<path d="M1.5 11.5l5.5 5.5M7 12v5h-5" stroke="#58b830" stroke-width="2.6" fill="none"/>
<text x="13" y="19" font-family="Liberation Sans" font-weight="bold" font-size="8" fill="#26365e">Z</text>
<path d="M8 8l1 1M10.5 10.5l1 1M13 13l1 1" stroke="#333"/></svg>
<svg style="left:745px;top:23px" width="22" height="21" viewBox="0 0 22 21"><text x="0.5" y="8" font-family="Liberation Sans" font-weight="bold" font-size="8" fill="#26365e">Z</text>
<path d="M1.5 11.5l5.5 5.5M7 12v5h-5" stroke="#3f6ea8" stroke-width="2.6" fill="none"/>
<text x="13" y="19" font-family="Liberation Sans" font-weight="bold" font-size="8" fill="#7f8ba6">A</text>
<path d="M8 8l1 1M10.5 10.5l1 1M13 13l1 1" stroke="#333"/></svg>
<div style="left:775px;top:24px;width:1px;height:16px;background:#d8d5d1;"></div>
<div style="left:776px;top:24px;width:1px;height:16px;background:#f0eeec;"></div>
<svg style="left:783px;top:20px" width="26" height="25" viewBox="0 0 26 25"><rect x="12" y="2" width="5" height="6" fill="#e5e5e5" stroke="#666"/>
<circle cx="20.5" cy="7" r="3" fill="#eee" stroke="#666"/>
<ellipse cx="11" cy="16" rx="9.5" ry="7.5" fill="#d42a22" stroke="#a01a14"/>
<path d="M11 16l9.5-1.5c0.5 3-1.5 6-5 7.5z" fill="#8aa83a"/>
<path d="M11 16l9.5-1.5c-0.5-2-2-4-4-5z" fill="#e8963a"/></svg>
<svg style="left:817px;top:20px" width="24" height="25" viewBox="0 0 24 25"><path d="M2 22l11-13" stroke="#444" stroke-width="1.6"/>
<path d="M1 23l3-4l2 2z" fill="#111"/>
<rect x="13.5" y="4.5" width="8" height="16" rx="1" fill="#e3a14a" stroke="#8a6a3a"/>
<path d="M14 9h7M14 13h7M14 17h7" stroke="#f3d09a"/>
<circle cx="19" cy="3" r="1.5" fill="#5a3a22"/>
<rect x="12" y="20.5" width="11" height="2.5" fill="#8a8a8a"/></svg>
<div style="left:850px;top:24px;width:1px;height:16px;background:#d8d5d1;"></div>
<div style="left:851px;top:24px;width:1px;height:16px;background:#f0eeec;"></div>
<svg style="left:859px;top:22px" width="22" height="22" viewBox="0 0 22 22"><defs><radialGradient id="gnv" cx="0.45" cy="0.4" r="0.6"><stop offset="0" stop-color="#5a9aaa"/><stop offset="1" stop-color="#2a5a6c"/></radialGradient></defs>
<circle cx="11" cy="11" r="9.8" fill="url(#gnv)" stroke="#a3c2c9" stroke-width="1.6"/>
<path d="M7 7l8 8M14 6l-3 5" stroke="#7fb0bc" stroke-width="1"/>
<path d="M5 14c3 2 7 3 11 0" stroke="#62b4bc" stroke-width="1.3" fill="none"/></svg>
<svg style="left:891px;top:23px" width="23" height="21" viewBox="0 0 23 21"><defs><linearGradient id="gwn" x1="0" y1="0" x2="0" y2="1"><stop offset="0" stop-color="#555"/><stop offset="1" stop-color="#2c2c2c"/></linearGradient></defs>
<rect x="0.5" y="0.5" width="16" height="13" fill="#fff" stroke="#8a8a8a"/>
<rect x="2" y="2" width="13" height="10" fill="url(#gwn)"/>
<rect x="6.5" y="6.5" width="15" height="13" fill="#fff" stroke="#8a8a8a"/>
<rect x="8" y="8" width="12" height="10" fill="url(#gwn)"/></svg>
<div style="left:923px;top:24px;width:1px;height:16px;background:#d8d5d1;"></div>
<div style="left:924px;top:24px;width:1px;height:16px;background:#f0eeec;"></div>
<svg style="left:932px;top:21px" width="24" height="24" viewBox="0 0 24 24"><defs><radialGradient id="ghl" cx="0.5" cy="0.35" r="0.65"><stop offset="0" stop-color="#5b90c4"/><stop offset="1" stop-color="#2f5f92"/></radialGradient></defs><circle cx="12" cy="12" r="10.5" fill="url(#ghl)" stroke="#b9d3ea" stroke-width="1"/>
<path d="M8.8 9c0-2.2 1.5-3.4 3.3-3.4s3.3 1.2 3.3 3.1c0 2.5-3 2.6-3 4.8" stroke="#e8f2fb" stroke-width="1.9" fill="none"/>
<circle cx="12.3" cy="17.3" r="1.4" fill="#e8f2fb"/></svg>
<svg style="left:31px;top:62px" width="24" height="24" viewBox="0 0 24 24"><defs><linearGradient id="ghd" x1="0" y1="0" x2="0" y2="1"><stop offset="0" stop-color="#f4e060"/><stop offset="1" stop-color="#e8a030"/></linearGradient></defs>
<rect x="1.5" y="1.5" width="21" height="21" fill="#e2e2e0" stroke="#555"/>
<rect x="8.5" y="1.5" width="7" height="21" fill="url(#ghd)"/>
<path d="M8.5 1.5v21M15.5 1.5v21M1.5 8.5h21M1.5 15.5h21" stroke="#555"/>
<rect x="1.5" y="1.5" width="21" height="21" fill="none" stroke="#555"/>
<path d="M10 4h2v7h1v-2h2v3h1v-1h2v7l-2 2h-5l-3-4v-3h2z" fill="#eb9a2e" stroke="#b06010" stroke-width="0.7"/>
<rect x="10" y="19" width="8" height="2" fill="#2a3a5a"/></svg>
<div style="left:63px;top:65px;width:1px;height:18px;background:#d8d5d1;"></div>
<div style="left:64px;top:65px;width:1px;height:18px;background:#f0eeec;"></div>
<div style="left:69px;top:64px;width:156px;height:21px;border:1px solid #a6a4a0;border-radius:3px;background:#e8e7e5;box-shadow:inset 0 1px 0 #f4f3f1"></div>
<div style="left:204px;top:65px;width:1px;height:19px;background:#bebcb8;"></div>
<div class="t" style="left:75px;top:67px;font-size:15px;color:#3a3a3a">Arial</div>
<svg style="left:210px;top:72px" width="9" height="6" viewBox="0 0 9 6"><path d="M0.5 0.5h8l-4 5z" fill="#707070"/></svg>
<div style="left:234px;top:64px;width:78px;height:21px;border:1px solid #a6a4a0;border-radius:3px;background:#e8e7e5;box-shadow:inset 0 1px 0 #f4f3f1"></div>
<div style="left:290px;top:65px;width:1px;height:19px;background:#bebcb8;"></div>
<div class="t" style="left:241px;top:67px;font-size:15px;color:#3a3a3a">11</div>
<svg style="left:296px;top:72px" width="9" height="6" viewBox="0 0 9 6"><path d="M0.5 0.5h8l-4 5z" fill="#707070"/></svg>
<div style="left:316px;top:65px;width:1px;height:18px;background:#d8d5d1;"></div>
<div style="left:317px;top:65px;width:1px;height:18px;background:#f0eeec;"></div>
<svg style="left:326px;top:65px" width="21" height="17" viewBox="0 0 21 17"><path d="M1 15.5L7 0.8H14L20 15.5H14.5L13.2 12H7.8L6.5 15.5ZM8.8 9H12.2L10.5 4.2Z" fill="#86a8d8" stroke="#2c4d86" stroke-width="1.3" fill-rule="evenodd" stroke-linejoin="round"/><path d="M9.5 2.5h2" stroke="#c8daf0"/></svg>
<svg style="left:361px;top:65px" width="18" height="17" viewBox="0 0 18 17"><path d="M0.8 15.5L12 0.8H17L16 15.5H11.5L11.7 12.5H7L5 15.5ZM8.8 10H11.8L12.2 4.8Z" fill="#86a8d8" stroke="#2c4d86" stroke-width="1.3" fill-rule="evenodd" stroke-linejoin="round"/></svg>
<svg style="left:394px;top:64px" width="18" height="20" viewBox="0 0 18 20"><path d="M0.8 14.5L6.5 0.8H10.5L16.2 14.5H13.5L12 11H5L3.5 14.5ZM6 8.5H11L8.5 3Z" fill="#a8c2e6" stroke="#2c4d86" stroke-width="1.2" fill-rule="evenodd" stroke-linejoin="round"/><rect x="0.5" y="17" width="17" height="2.6" fill="#5a7db5" stroke="#2c4d86" stroke-width="0.8"/></svg>
<div style="left:422px;top:65px;width:1px;height:18px;background:#d8d5d1;"></div>
<div style="left:423px;top:65px;width:1px;height:18px;background:#f0eeec;"></div>
<svg style="left:432px;top:62px" width="22" height="22" viewBox="0 0 22 22"><rect x="0.5" y="0.5" width="20" height="20" fill="#ececec" stroke="#666"/><path d="M3 4.5h12" stroke="#8a8a8a" stroke-width="1"/><path d="M3 6.5h10" stroke="#8a8a8a" stroke-width="1"/><path d="M3 8.5h14" stroke="#8a8a8a" stroke-width="1"/><path d="M3 10.5h8" stroke="#8a8a8a" stroke-width="1"/><path d="M3 12.5h13" stroke="#8a8a8a" stroke-width="1"/><path d="M3 14.5h9" stroke="#8a8a8a" stroke-width="1"/><path d="M3 16.5h12" stroke="#8a8a8a" stroke-width="1"/><path d="M3 18.5h7" stroke="#8a8a8a" stroke-width="1"/></svg>
<svg style="left:466px;top:62px" width="22" height="22" viewBox="0 0 22 22"><rect x="0.5" y="0.5" width="20" height="20" fill="#ececec" stroke="#666"/><path d="M4.5 4.5h12" stroke="#8a8a8a" stroke-width="1"/><path d="M6.5 6.5h8" stroke="#8a8a8a" stroke-width="1"/><path d="M4.0 8.5h13" stroke="#8a8a8a" stroke-width="1"/><path d="M6.0 10.5h9" stroke="#8a8a8a" stroke-width="1"/><path d="M4.5 12.5h12" stroke="#8a8a8a" stroke-width="1"/><path d="M7.0 14.5h7" stroke="#8a8a8a" stroke-width="1"/><path d="M5.0 16.5h11" stroke="#8a8a8a" stroke-width="1"/><path d="M6.5 18.5h8" stroke="#8a8a8a" stroke-width="1"/></svg>
<svg style="left:499px;top:62px" width="22" height="22" viewBox="0 0 22 22"><rect x="0.5" y="0.5" width="20" height="20" fill="#ececec" stroke="#666"/><path d="M6 4.5h12" stroke="#8a8a8a" stroke-width="1"/><path d="M10 6.5h8" stroke="#8a8a8a" stroke-width="1"/><path d="M4 8.5h14" stroke="#8a8a8a" stroke-width="1"/><path d="M9 10.5h9" stroke="#8a8a8a" stroke-width="1"/><path d="M5 12.5h13" stroke="#8a8a8a" stroke-width="1"/><path d="M11 14.5h7" stroke="#8a8a8a" stroke-width="1"/><path d="M6 16.5h12" stroke="#8a8a8a" stroke-width="1"/><path d="M9 18.5h9" stroke="#8a8a8a" stroke-width="1"/></svg>
<svg style="left:532px;top:62px" width="22" height="22" viewBox="0 0 22 22"><rect x="0.5" y="0.5" width="20" height="20" fill="#ececec" stroke="#666"/><path d="M3 4.5h15" stroke="#8a8a8a" stroke-width="1"/><path d="M3 6.5h15" stroke="#8a8a8a" stroke-width="1"/><path d="M3 8.5h15" stroke="#8a8a8a" stroke-width="1"/><path d="M3 10.5h15" stroke="#8a8a8a" stroke-width="1"/><path d="M3 12.5h15" stroke="#8a8a8a" stroke-width="1"/><path d="M3 14.5h15" stroke="#8a8a8a" stroke-width="1"/><path d="M3 16.5h15" stroke="#8a8a8a" stroke-width="1"/><path d="M3 18.5h15" stroke="#8a8a8a" stroke-width="1"/></svg>
<svg style="left:567px;top:63px" width="20" height="21" viewBox="0 0 20 21"><rect x="0.5" y="0.5" width="18" height="19" fill="#e8e8e8" stroke="#c3c3c3"/>
<path d="M0.5 6.5h18M0.5 13.5h18M6.5 0.5v6M12.5 0.5v6M6.5 13.5v6M12.5 13.5v6" stroke="#c3c3c3"/>
<path d="M4 10h11" stroke="#bbb"/></svg>
<div style="left:596px;top:65px;width:1px;height:18px;background:#d8d5d1;"></div>
<div style="left:597px;top:65px;width:1px;height:18px;background:#f0eeec;"></div>
<svg style="left:607px;top:63px" width="20" height="21" viewBox="0 0 20 21"><path d="M2 15c0 3 4 4 6 2" stroke="#d4b820" stroke-width="2.2" fill="none"/>
<circle cx="3.5" cy="15.5" r="2.5" fill="none" stroke="#c8ac18" stroke-width="1.6"/>
<rect x="7.5" y="1.5" width="5" height="17" rx="2" fill="#e8d440" stroke="#b89a10"/>
<rect x="12.5" y="6.5" width="5" height="12" rx="2" fill="#e8d440" stroke="#b89a10"/>
<path d="M8 5h4M8 9h4M8 13h4M13 10h4M13 14h4" stroke="#b89a10"/></svg>
<div class="t" style="left:642px;top:67px;font-size:13px;font-weight:bold;color:#111">%</div>
<svg style="left:673px;top:64px" width="21" height="19" viewBox="0 0 21 19"><text x="0" y="7.5" font-family="Liberation Sans" font-weight="bold" font-size="9" fill="#111">0</text>
<path d="M6 3.5h7.5v4" stroke="#333" stroke-width="2" fill="none"/><path d="M11 6l2.5 3l2.5-3z" fill="#333"/>
<text x="0" y="18" font-family="Liberation Sans" font-weight="bold" font-size="9" fill="#111">.000</text></svg>
<svg style="left:706px;top:64px" width="21" height="19" viewBox="0 0 21 19"><text x="0" y="7.5" font-family="Liberation Sans" font-weight="bold" font-size="9" fill="#111">.000</text>
<text x="0" y="18" font-family="Liberation Sans" font-weight="bold" font-size="9" fill="#111">0</text>
<path d="M15.5 10v4.5h-7" stroke="#333" stroke-width="2" fill="none"/><path d="M9.5 12l-3 2.5l3 2.5z" fill="#333"/></svg>
<div style="left:736px;top:65px;width:1px;height:18px;background:#d8d5d1;"></div>
<div style="left:737px;top:65px;width:1px;height:18px;background:#f0eeec;"></div>
<svg style="left:746px;top:62px" width="23" height="22" viewBox="0 0 23 22"><rect x="0.5" y="0.5" width="21" height="20" fill="#dfe2e6" stroke="#707070"/>
<path d="M3 6.5v8l-4-4z" transform="translate(4 0)" fill="#3f5f86"/><path d="M9 6.5h9M9 9h9M9 11.5h7M9 14h5" stroke="#555"/></svg>
<svg style="left:779px;top:62px" width="23" height="22" viewBox="0 0 23 22"><rect x="0.5" y="0.5" width="21" height="20" fill="#dfe2e6" stroke="#707070"/>
<path d="M3 6.5v8l4-4z" fill="#3f5f86"/><path d="M9 6.5h9M9 9h9M9 11.5h7M9 14h5" stroke="#555"/></svg>
<div style="left:810px;top:65px;width:1px;height:18px;background:#d8d5d1;"></div>
<div style="left:811px;top:65px;width:1px;height:18px;background:#f0eeec;"></div>
<svg style="left:819px;top:64px" width="23" height="21" viewBox="0 0 23 21"><rect x="1.5" y="1.5" width="19" height="18" fill="#ebebeb" stroke="#666"/>
<path d="M11 2v17M2 10.5h18" stroke="#666"/>
<path d="M3 6.5h6M3 14h6" stroke="#999" stroke-dasharray="1 1"/></svg>
<svg style="left:852px;top:72px" width="7" height="4" viewBox="0 0 7 4"><path d="M0.5 0.5h6l-3 3z" fill="#000"/></svg>
<svg style="left:868px;top:63px" width="24" height="23" viewBox="0 0 24 23"><defs><linearGradient id="gbg" x1="0" y1="0" x2="1" y2="0"><stop offset="0" stop-color="#3e68a8"/><stop offset="1" stop-color="#c8d8ee"/></linearGradient></defs>
<rect x="1.5" y="1.5" width="20" height="15" fill="url(#gbg)" stroke="#222"/>
<path d="M4 4.5h11M4 7h9M4 9.5h11M4 12h8M4 14.5h10" stroke="#e8eef8"/>
<rect x="1.5" y="16.5" width="20" height="5" fill="#f6f6f6" stroke="#222"/></svg>
<svg style="left:902px;top:72px" width="7" height="4" viewBox="0 0 7 4"><path d="M0.5 0.5h6l-3 3z" fill="#000"/></svg>
<svg style="left:917px;top:62px" width="26" height="24" viewBox="0 0 26 24"><circle cx="6.5" cy="5" r="4" fill="#d8281e"/>
<circle cx="5.5" cy="10.5" r="3.5" fill="#58b030"/>
<circle cx="11" cy="7" r="4" fill="#4a72b8"/>
<path d="M9 17c0-6 3-9 7-9s6 4 6 9M12.5 17c0-4 2-6 4-6s3.5 2 3.5 6" stroke="#4a72b8" stroke-width="1.6" fill="none"/>
<rect x="1" y="17" width="23" height="6" fill="#8e1410"/></svg>
<svg style="left:952px;top:72px" width="7" height="4" viewBox="0 0 7 4"><path d="M0.5 0.5h6l-3 3z" fill="#000"/></svg>
<div style="left:968px;top:65px;width:1px;height:18px;background:#d8d5d1;"></div>
<div style="left:969px;top:65px;width:1px;height:18px;background:#f0eeec;"></div>
<svg style="left:978px;top:62px" width="24" height="23" viewBox="0 0 24 23"><rect x="1.5" y="1.5" width="21" height="20" fill="#e6e6e6" stroke="#6a6a6a"/>
<path d="M1.5 6h21M1.5 10h21M1.5 14h8M1.5 18h8M7 1.5v20M12 1.5v8M17 1.5v8" stroke="#7a7a7a"/></svg>
<div style="left:14px;top:102px;width:155px;height:21px;border:1px solid #a6a4a0;border-radius:3px;background:#e8e7e5;box-shadow:inset 0 1px 0 #f4f3f1"></div>
<div style="left:147px;top:103px;width:1px;height:19px;background:#bebcb8;"></div>
<div class="t" style="left:20px;top:106px;font-size:14px;color:#3a3a3a">H16</div>
<svg style="left:154px;top:110px" width="9" height="6" viewBox="0 0 9 6"><path d="M0.5 0.5h8l-4 5z" fill="#707070"/></svg>
<div class="t" style="left:184px;top:105px;font-family:Liberation Serif;font-style:italic;font-weight:bold;font-size:16px;color:#111">f<span style="font-size:12px;letter-spacing:-0.8px;color:#222">(x)</span></div>
<svg style="left:217px;top:103px" width="17" height="17" viewBox="0 0 17 17"><path d="M0.5 0.5H15.5L16 4.5H14.5L13.5 3H5.5L10.5 8.5L5 14H14L15 12H16.5L15.5 16.5H0.5V15L6.5 8.8L0.5 2Z" fill="#111"/></svg>
<div style="left:252px;top:108px;width:16px;height:2px;background:#111;"></div>
<div style="left:252px;top:113px;width:16px;height:2px;background:#111;"></div>
<div style="left:281px;top:102px;width:1px;height:21px;background:#d8d5d1;"></div>
<div style="left:282px;top:102px;width:1px;height:21px;background:#f0eeec;"></div>
<div style="left:286px;top:101px;width:921px;height:23px;border:1px solid #a3a3a3;border-radius:3px;background:#e9e9e9"></div>
<div style="left:1211px;top:102px;width:11px;height:21px;border:1px solid #b8b8b8;border-radius:5px;background:#e8e8e8"></div>
<svg style="left:1213px;top:110px" width="7" height="4" viewBox="0 0 7 4"><path d="M0.5 0.5h6l-3 3z" fill="#333"/></svg>
<div style="left:1215px;top:131px;width:13px;height:807px;background:#d2d1cf;"></div>
<div style="left:1215px;top:131px;width:13px;height:19px;background:#e9e9e9;"></div>
<div style="left:1227px;top:131px;width:1px;height:807px;background:#e9e8ea;"></div>
<div style="left:1215px;top:149px;width:12px;height:377px;border:1px solid #a9a8a6;border-radius:6px;background:linear-gradient(90deg,#f0efee,#dddde4)"></div>
<div style="left:1215px;top:136px;width:12px;height:14px;border:1px solid #b5b4b2;border-radius:6px 6px 0 0;background:#ebebeb"></div>
<svg style="left:1218px;top:141px" width="6" height="4" viewBox="0 0 6 4"><path d="M0 3.5l3-3l3 3z" fill="#999"/></svg>
<div style="left:1215px;top:920px;width:12px;height:17px;border:1px solid #b5b4b2;border-radius:0 0 6px 6px;background:#ebebeb"></div>
<svg style="left:1218px;top:927px" width="6" height="4" viewBox="0 0 6 4"><path d="M0 0.5h6l-3 3z" fill="#666"/></svg>
<div style="left:1218px;top:335px;width:5px;height:1px;background:#b0b0b0;"></div>
<div style="left:1218px;top:337px;width:5px;height:1px;background:#b0b0b0;"></div>
<div style="left:1218px;top:339px;width:5px;height:1px;background:#b0b0b0;"></div>
<div style="left:1218px;top:133px;width:7px;height:2px;background:#222;"></div>
<div style="left:1215px;top:130px;width:13px;height:1px;background:#a3a3a3;"></div>
<div style="left:13px;top:938px;width:1202px;height:13px;background:#e6e5e3;"></div>
<div style="left:13px;top:938px;width:1202px;height:1px;background:#a9a9a9;"></div>
<div style="left:15px;top:940px;width:11px;height:10px;border:1px solid #cfcfcf;border-radius:2px;background:#e9e9e9"></div>
<div style="left:27px;top:940px;width:11px;height:10px;border:1px solid #cfcfcf;border-radius:2px;background:#e9e9e9"></div>
<div style="left:39px;top:940px;width:11px;height:10px;border:1px solid #cfcfcf;border-radius:2px;background:#e9e9e9"></div>
<div style="left:51px;top:940px;width:11px;height:10px;border:1px solid #cfcfcf;border-radius:2px;background:#e9e9e9"></div>
<svg style="left:17px;top:942px" width="8" height="6" viewBox="0 0 8 6"><path d="M1 0v6M7 0v6M1 3h6" stroke="#bbb"/></svg>
<svg style="left:30px;top:942px" width="6" height="6" viewBox="0 0 6 6"><path d="M4.5 0.5v5l-3.5-2.5z" fill="#bbb"/></svg>
<svg style="left:42px;top:942px" width="6" height="6" viewBox="0 0 6 6"><path d="M1.5 0.5v5l3.5-2.5z" fill="#bbb"/></svg>
<svg style="left:53px;top:942px" width="8" height="6" viewBox="0 0 8 6"><path d="M1 0v6M7 0v6M1 3h6" stroke="#bbb"/></svg>
<div style="left:13px;top:938px;width:1202px;height:1px;background:#e6e5e3;"></div>
<div style="left:123px;top:938px;width:885px;height:1px;background:#8a8a8a;"></div>
<svg style="left:60px;top:937px" width="140" height="15" viewBox="0 0 140 15"><path d="M5.5 1l7 12h46.5l4.5-12" fill="#e8e8e8" stroke="#555" stroke-width="0.9"/>
<path d="M63.5 1l-4.5 12h48.5l5.5-12z" fill="#d3d3d3" stroke="#6a6a6a" stroke-width="0.9"/>
<path d="M113 1l-5.5 12h23l5.5-12z" fill="#cbcbcb" stroke="#7a7a7a" stroke-width="0.9"/></svg>
<div class="t" style="left:74px;top:939px;font-size:11.5px;font-weight:bold;color:#333">Vorlage</div>
<div class="t" style="left:125px;top:939px;font-size:11.5px;color:#444">Beispiel</div>
<svg style="left:176px;top:940px" width="11" height="11" viewBox="0 0 11 11"><path d="M3.5 0.5h4v3h3v4h-3v3h-4v-3h-3v-4h3z" fill="#58b030" stroke="#3a8a1a" stroke-width="0.8"/></svg>
<div style="left:1008px;top:938px;width:7px;height:12px;background:#e6e5e3;"></div>
<div style="left:1008px;top:938px;width:7px;height:13px;border:1px solid #999;border-top:none"></div>
<div style="left:1016px;top:938px;width:198px;height:13px;border:1px solid #b0b0b0;border-radius:6px;background:#cfcfcf"></div>
<div style="left:1026px;top:939px;width:71px;height:11px;border:1px solid #a8a8a8;border-radius:6px;background:linear-gradient(#f2f2f2,#dcdcdc)"></div>
<svg style="left:1019px;top:941px" width="5" height="6" viewBox="0 0 5 6"><path d="M4.5 0.5v5l-4-2.5z" fill="#999"/></svg>
<svg style="left:1200px;top:941px" width="5" height="6" viewBox="0 0 5 6"><path d="M0.5 0.5v5l4-2.5z" fill="#555"/></svg>
<div style="left:1059px;top:942px;width:1px;height:4px;background:#999;"></div>
<div style="left:1061px;top:942px;width:1px;height:4px;background:#999;"></div>
<div style="left:1063px;top:942px;width:1px;height:4px;background:#999;"></div>
<div style="left:1212px;top:940px;width:1px;height:8px;background:#111;"></div>
<div style="left:16px;top:967px;width:7px;height:1px;background:#b9b7b4;"></div>
<div style="left:16px;top:970px;width:7px;height:1px;background:#b9b7b4;"></div>
<div style="left:16px;top:973px;width:7px;height:1px;background:#b9b7b4;"></div>
<div style="left:28px;top:961px;width:248px;height:21px;border:1px solid #a6a4a0;border-radius:3px;background:#e8e7e5;box-shadow:inset 0 1px 0 #f4f3f1"></div>
<div style="left:254px;top:962px;width:1px;height:19px;background:#bebcb8;"></div>
<div class="t" style="left:34px;top:964px;font-size:15px;color:#8a8a8a">Find</div>
<svg style="left:260px;top:969px" width="9" height="6" viewBox="0 0 9 6"><path d="M0.5 0.5h8l-4 5z" fill="#707070"/></svg>
<svg style="left:284px;top:966px" width="18" height="10" viewBox="0 0 18 10"><path d="M1.5 1.5l7.5 6l7.5-6" stroke="#cfcdca" stroke-width="3" fill="none"/></svg>
<svg style="left:317px;top:966px" width="18" height="10" viewBox="0 0 18 10"><path d="M1.5 8.5l7.5-6l7.5 6" stroke="#cfcdca" stroke-width="3" fill="none"/></svg>
<div style="left:345px;top:962px;width:1px;height:20px;background:#d8d5d1;"></div>
<div style="left:346px;top:962px;width:1px;height:20px;background:#f0eeec;"></div>
<svg style="left:355px;top:960px" width="25" height="25" viewBox="0 0 25 25"><circle cx="8" cy="8" r="6" fill="#f0f0f0" stroke="#222" stroke-width="2.2"/>
<path d="M12.5 12.5l9 9" stroke="#222" stroke-width="3"/>
<path d="M8 22l2-4l9-9l3 3l-9 9z" fill="#333"/>
<path d="M8 22l2-4l2 2z" fill="#d8b070"/></svg>
<div style="left:13px;top:991px;width:1214px;height:1px;background:#bdbab6;"></div>
<div style="left:13px;top:992px;width:1214px;height:1px;background:#f3f2f0;"></div>
<div class="t" style="left:23px;top:998px;font-size:12px;color:#3c3c3c">Sheet 1 / 2</div>
<div style="left:269px;top:995px;width:1px;height:16px;background:#d0cdc9;"></div>
<div style="left:270px;top:995px;width:1px;height:16px;background:#f3f2f0;"></div>
<div style="left:565px;top:995px;width:1px;height:16px;background:#d0cdc9;"></div>
<div style="left:566px;top:995px;width:1px;height:16px;background:#f3f2f0;"></div>
<div style="left:635px;top:995px;width:1px;height:16px;background:#d0cdc9;"></div>
<div style="left:636px;top:995px;width:1px;height:16px;background:#f3f2f0;"></div>
<div style="left:663px;top:995px;width:1px;height:16px;background:#d0cdc9;"></div>
<div style="left:664px;top:995px;width:1px;height:16px;background:#f3f2f0;"></div>
<div style="left:692px;top:995px;width:1px;height:16px;background:#d0cdc9;"></div>
<div style="left:693px;top:995px;width:1px;height:16px;background:#f3f2f0;"></div>
<div style="left:721px;top:995px;width:1px;height:16px;background:#d0cdc9;"></div>
<div style="left:722px;top:995px;width:1px;height:16px;background:#f3f2f0;"></div>
<div style="left:1026px;top:995px;width:1px;height:16px;background:#d0cdc9;"></div>
<div style="left:1027px;top:995px;width:1px;height:16px;background:#f3f2f0;"></div>
<div style="left:1179px;top:995px;width:1px;height:16px;background:#d0cdc9;"></div>
<div style="left:1180px;top:995px;width:1px;height:16px;background:#f3f2f0;"></div>
<div class="t" style="left:278px;top:998px;font-size:12px;color:#3c3c3c">PageStyle_Vorlage</div>
<svg style="left:643px;top:999px" width="14" height="9" viewBox="0 0 14 9"><rect x="0.5" y="1.5" width="8" height="5" fill="#777"/><path d="M10 0.5h3M11.5 0.5v8M10 8.5h3" stroke="#555"/></svg>
<svg style="left:671px;top:995px" width="17" height="16" viewBox="0 0 17 16"><path d="M3.5 0.5h8l4 4v11h-12z" fill="#fff" stroke="#6a6ac0"/>
<path d="M5 6h8M5 9h8M5 12h8" stroke="#b0b0e0"/>
<path d="M4 2v12" stroke="#c02020" stroke-width="2.4"/><path d="M1.5 5l2.5-3l2.5 3M1.5 11l2.5 3l2.5-3" stroke="#c02020" fill="none"/></svg>
<div class="t" style="left:857px;top:998px;font-size:11.5px;color:#3c3c3c">Sum=0</div>
<div style="left:1037px;top:1003px;width:8px;height:2px;background:#777;"></div>
<div style="left:1051px;top:1003px;width:107px;height:1px;background:#9a9a9a;"></div>
<div style="left:1051px;top:1004px;width:107px;height:1px;background:#c8c8c8;"></div>
<div style="left:1098px;top:999px;width:10px;height:10px;border:1px solid #666;border-radius:50%;background:#f4f4f4"></div>
<div style="left:1164px;top:1003px;width:8px;height:2px;background:#777;"></div>
<div style="left:1167px;top:1000px;width:2px;height:8px;background:#777;"></div>
<div class="t" style="left:1187px;top:998px;font-size:12px;color:#3c3c3c">100%</div>
<div style="left:13px;top:13px;width:1px;height:1000px;background:rgba(255,222,170,0.55)"></div>
<div style="left:13px;top:13px;width:1215px;height:1px;background:rgba(255,222,170,0.55)"></div>
<div style="left:1227px;top:13px;width:1px;height:1000px;background:rgba(255,222,170,0.45)"></div>
<div style="left:13px;top:1012px;width:1215px;height:1px;background:rgba(255,222,170,0.55)"></div>
</body></html>
